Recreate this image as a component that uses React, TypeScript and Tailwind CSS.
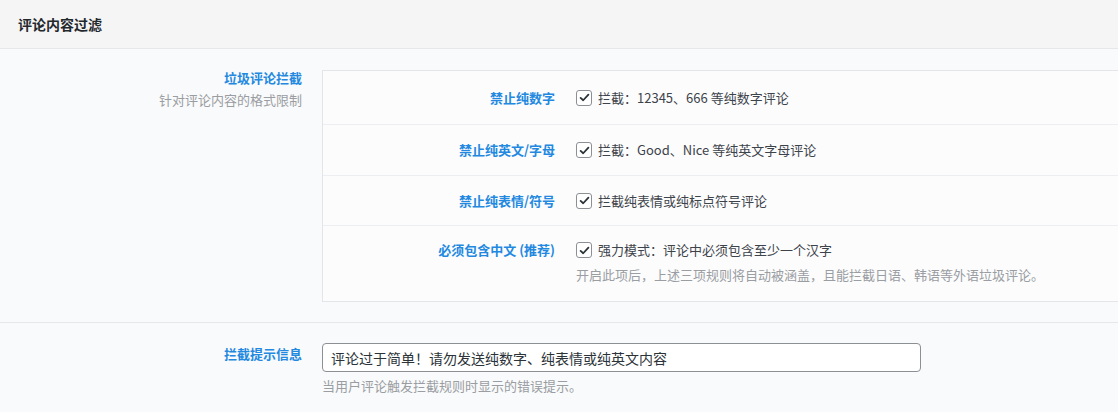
import React from "react";

const font = {
  fontFamily: '"Noto Sans CJK SC", "Noto Sans", "Liberation Sans", sans-serif',
};

function Check() {
  return (
    <span className="flex h-4 w-4 shrink-0 items-center justify-center rounded-[3px] border border-[#8c8f94] bg-white">
      <svg viewBox="0 0 16 16" className="h-[13px] w-[13px]" fill="none">
        <path
          d="M3.2 8.4 L6.4 11.4 L12.8 4.4"
          stroke="#2c3338"
          strokeWidth="2.2"
          strokeLinecap="round"
          strokeLinejoin="round"
        />
      </svg>
    </span>
  );
}

type Rule = { label: string; text: string; help?: string; h: string };

const rules: Rule[] = [
  { label: "禁止纯数字", text: "拦截：12345、666 等纯数字评论", h: "h-[54px]" },
  { label: "禁止纯英文/字母", text: "拦截：Good、Nice 等纯英文字母评论", h: "h-[51px]" },
  { label: "禁止纯表情/符号", text: "拦截纯表情或纯标点符号评论", h: "h-[50px]" },
  {
    label: "必须包含中文 (推荐)",
    text: "强力模式：评论中必须包含至少一个汉字",
    help: "开启此项后，上述三项规则将自动被涵盖，且能拦截日语、韩语等外语垃圾评论。",
    h: "h-[75px]",
  },
];

function RuleRow({ rule, last }: { rule: Rule; last: boolean }) {
  return (
    <div
      className={`flex ${rule.h} ${rule.help ? "items-start pt-[14px]" : "items-center"} ${
        last ? "" : "border-b border-[#eceef1]"
      }`}
    >
      <div className="w-[232px] shrink-0 text-right text-[13px] font-bold leading-[20px] text-[#2389e0]">
        {rule.label}
      </div>
      <div className="pl-[21px]">
        <label className="flex h-[20px] items-center gap-[6px] text-[13px] leading-[20px] text-[#3c434a]">
          <Check />
          <span>{rule.text}</span>
        </label>
        {rule.help && (
          <p className="mt-[6px] text-[13px] leading-[18px] text-[#9a9da2]">{rule.help}</p>
        )}
      </div>
    </div>
  );
}

export default function App() {
  return (
    <div className="h-[412px] w-[1118px] overflow-hidden bg-[#f9fafb]" style={font}>
      <div className="flex h-[49px] items-center border-b border-[#e6e7e9] bg-[#f5f5f5] pl-[18px]">
        <h2 className="text-[14px] font-bold text-[#23282d]">评论内容过滤</h2>
      </div>

      <section className="flex border-b border-[#e6e7e9] pt-[21px] pb-[20px]">
        <div className="w-[302px] shrink-0 text-right">
          <div className="text-[13px] font-bold leading-[16px] text-[#2389e0]">垃圾评论拦截</div>
          <div className="mt-[6px] text-[13px] leading-[16px] text-[#9a9da2]">针对评论内容的格式限制</div>
        </div>
        <div className="ml-[20px] flex-1 border border-r-0 border-[#e3e5e8] bg-[#fcfcfd]">
          {rules.map((r, i) => (
            <RuleRow key={r.label} rule={r} last={i === rules.length - 1} />
          ))}
        </div>
      </section>

      <section className="flex pt-[20px]">
        <div className="w-[302px] shrink-0 pt-[1px] text-right text-[13px] font-bold leading-[20px] text-[#2389e0]">
          拦截提示信息
        </div>
        <div className="ml-[20px]">
          <input
            readOnly
            value="评论过于简单！请勿发送纯数字、纯表情或纯英文内容"
            className="h-[29px] w-[599px] rounded-[4px] border border-[#8c8f94] bg-white px-[8px] text-[14px] text-[#2c3338] outline-none"
            style={font}
          />
          <p className="mt-[5px] text-[13px] leading-[18px] text-[#9a9da2]">当用户评论触发拦截规则时显示的错误提示。</p>
        </div>
      </section>
    </div>
  );
}
